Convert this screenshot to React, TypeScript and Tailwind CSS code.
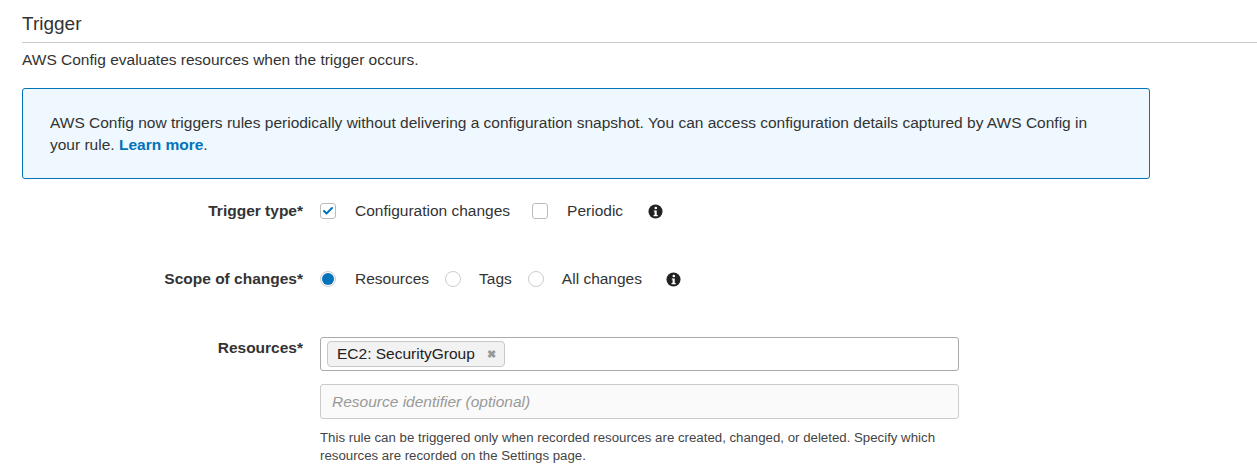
import { Check } from "lucide-react";

function InfoIcon() {
  return (
    <svg width="15" height="15" viewBox="0 0 16 16" className="shrink-0">
      <circle cx="8" cy="8" r="7.5" fill="#222" />
      <circle cx="8.3" cy="4.3" r="1.4" fill="#fff" />
      <path d="M6.2 6.8h3.1v4.9h1.1v1.3H5.9v-1.3h1.1V8.1h-.8z" fill="#fff" />
    </svg>
  );
}

function Checkbox({ checked }: { checked?: boolean }) {
  return (
    <span className="w-4 h-4 rounded-[3px] border border-[#bbb] bg-white flex items-center justify-center shrink-0">
      {checked && <Check className="w-3 h-3 text-[#0073bb]" strokeWidth={4} />}
    </span>
  );
}

function Radio({ checked }: { checked?: boolean }) {
  return (
    <span className="w-4 h-4 rounded-full border border-[#ccc] bg-white flex items-center justify-center shrink-0">
      {checked && <span className="w-3 h-3 rounded-full bg-[#0073bb]" />}
    </span>
  );
}

function Row({ label, children, top }: { label: string; children: React.ReactNode; top?: boolean }) {
  return (
    <div className={`flex ${top ? "items-start" : "items-center"}`}>
      <div className={`w-[281px] text-right font-bold text-[#333] text-[15.5px] leading-[20px] ${top ? "pt-[1px]" : ""}`}>
        {label}
      </div>
      <div className="ml-[17px] flex-1">{children}</div>
    </div>
  );
}

export default function App() {
  return (
    <div className="bg-white w-[1257px] h-[470px] overflow-hidden text-[15.5px] text-[#333]" style={{ fontFamily: '"Liberation Sans", Arial, sans-serif' }}>
      <div className="pl-[22px] pt-[12px]">
        <h2 className="text-[19px] leading-[24px] text-[#333] pb-[6px] border-b border-[#ccc]">Trigger</h2>
        <p className="mt-[7px] leading-[20px] text-[#333]">AWS Config evaluates resources when the trigger occurs.</p>

        <div className="mt-[18px] w-[1128px] h-[91px] border border-[#0073bb] rounded-[3px] bg-[#eef8fe] pl-[27px] pr-[45px] pt-[23px] leading-[22px] text-[#333]">
          <p>
            AWS Config now triggers rules periodically without delivering a configuration snapshot. You can access configuration details captured by AWS Config in your rule. <span className="font-bold text-[#0073bb]">Learn more</span>.
          </p>
        </div>

        <div className="mt-[22px] flex flex-col">
          <Row label="Trigger type*">
            <div className="flex items-center h-[20px] leading-[20px]">
              <Checkbox checked />
              <span className="ml-[19px]">Configuration changes</span>
              <span className="ml-[22px]"><Checkbox /></span>
              <span className="ml-[19px]">Periodic</span>
              <span className="ml-[25px]"><InfoIcon /></span>
            </div>
          </Row>

          <div className="mt-[48px]">
            <Row label="Scope of changes*">
              <div className="flex items-center h-[20px] leading-[20px]">
                <Radio checked />
                <span className="ml-[19px]">Resources</span>
                <span className="ml-[16px]"><Radio /></span>
                <span className="ml-[18px]">Tags</span>
                <span className="ml-[16px]"><Radio /></span>
                <span className="ml-[18px]">All changes</span>
                <span className="ml-[24px]"><InfoIcon /></span>
              </div>
            </Row>
          </div>

          <div className="mt-[48px]">
            <Row label="Resources*" top>
              <div className="w-[639px]">
                <div className="h-[34px] border border-[#aaa] rounded-[3px] bg-white flex items-center pl-[6px]">
                  <span className="h-[26px] flex items-center border border-[#c8c8c8] rounded-[4px] bg-[#f2f2f2] pl-[9px] pr-[8px] text-[#222]">
                    EC2: SecurityGroup
                    <span className="ml-[12px] text-[11px] font-bold text-[#999]">✖</span>
                  </span>
                </div>
                <div className="mt-[13px] h-[35px] border border-[#ccc] rounded-[3px] bg-[#fafafa] flex items-center pl-[11px] italic text-[#999]">
                  Resource identifier (optional)
                </div>
                <p className="mt-[10px] text-[13.25px] leading-[18px] text-[#444] w-[640px]">
                  This rule can be triggered only when recorded resources are created, changed, or deleted. Specify which resources are recorded on the Settings page.
                </p>
              </div>
            </Row>
          </div>
        </div>
      </div>
    </div>
  );
}
